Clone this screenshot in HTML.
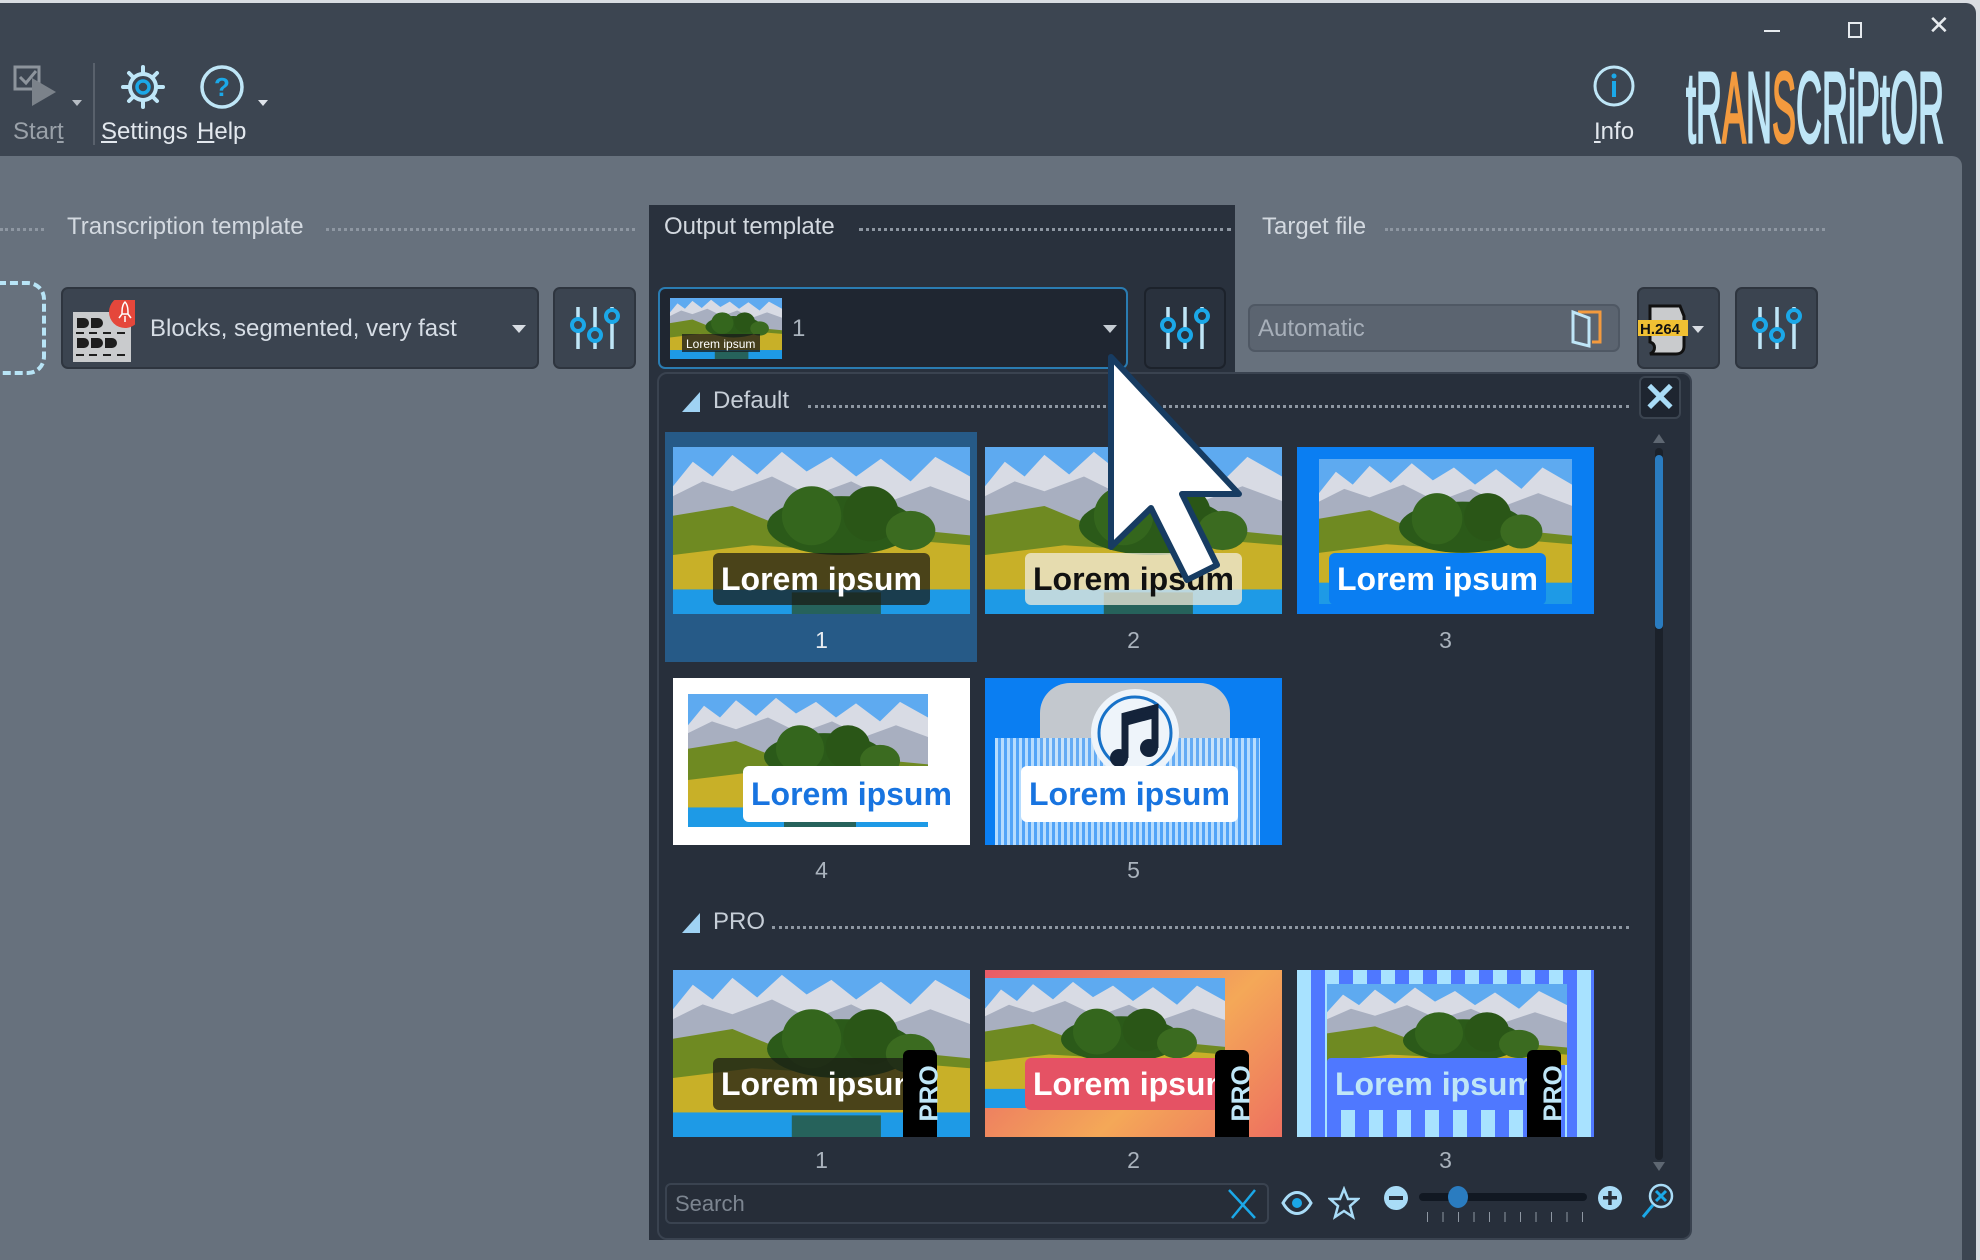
<!DOCTYPE html>
<html><head><meta charset="utf-8"><style>
*{margin:0;padding:0;box-sizing:border-box}
body{width:1980px;height:1260px;overflow:hidden;background:#d9dde2;font-family:"Liberation Sans",sans-serif;position:relative}
.a{position:absolute}
.win{left:0;top:3px;width:1976px;height:1257px;background:#3c4551;border-radius:0 10px 0 0}
.content{left:0;top:156px;width:1962px;height:1104px;background:#67717d;border-radius:0 10px 0 0}
.lbl{font-size:24px;color:#d3d9e0}
.dots{border-top:3px dotted #8e97a2;height:0}
.btn{background:#3b4450;border:2px solid #2e353f;border-radius:7px}
.tb{color:#e3e8ee;font-size:24px}
.num{font-size:23px;color:#aab3bd;width:297px;text-align:center}
.cap{font-weight:bold;font-size:32px;white-space:nowrap;line-height:52px;padding:0 8px;border-radius:6px}
.th{width:297px;height:167px;overflow:hidden}
</style></head><body>
<svg width="0" height="0" style="position:absolute">
<symbol id="sc" viewBox="0 0 300 170" preserveAspectRatio="none">
<rect width="300" height="170" fill="#3f8fe0"/>
<rect width="300" height="60" fill="#5eaaf0"/>
<polygon points="0,40 20,15 40,30 60,8 85,28 110,5 135,25 160,10 185,30 210,12 240,35 265,10 300,30 300,90 0,90" fill="#d8dbe4"/>
<polygon points="0,50 30,35 60,45 100,30 140,50 180,35 220,55 260,40 300,55 300,100 0,100" fill="#a8afc0"/>
<polygon points="0,70 60,60 120,85 200,80 300,90 300,150 0,150" fill="#6f8a22"/>
<polygon points="0,110 80,100 160,105 240,95 300,100 300,150 0,150" fill="#c8b028"/>
<ellipse cx="170" cy="80" rx="75" ry="30" fill="#2b5a19"/>
<ellipse cx="140" cy="70" rx="30" ry="30" fill="#34661d"/>
<ellipse cx="200" cy="68" rx="28" ry="28" fill="#2a5617"/>
<ellipse cx="240" cy="85" rx="25" ry="20" fill="#3b6b20"/>
<rect y="145" width="300" height="25" fill="#1e9ae6"/>
<rect x="120" y="148" width="90" height="22" fill="#2a4a20" opacity=".7"/>
</symbol>
</svg>

<div class="a win"></div>
<svg class="a" style="left:12px;top:64px" width="50" height="46" viewBox="0 0 50 46"><rect x="3" y="3" width="24" height="22" fill="none" stroke="#8d949c" stroke-width="3"/><path d="M8 13l6 6 10-12" fill="none" stroke="#8d949c" stroke-width="3"/><path d="M20 14v28l24-14z" fill="#7b828a"/></svg>
<div class="a" style="left:72px;top:100px;border:5px solid transparent;border-top:6px solid #b7bdc4"></div>
<div class="a tb" style="left:13px;top:118px;color:#9aa1a9">Star<u>t</u></div>
<div class="a" style="left:93px;top:63px;width:2px;height:82px;background:#59616c"></div>
<svg class="a" style="left:120px;top:64px" width="46" height="46" viewBox="0 0 46 46"><g stroke="#bfe6f7" stroke-width="4" stroke-linecap="round"><path d="M23 3v6M23 37v6M3 23h6M37 23h6M9 9l4 4M33 33l4 4M9 37l4-4M33 13l4-4"/></g><circle cx="23" cy="23" r="13" fill="none" stroke="#bfe6f7" stroke-width="4"/><circle cx="23" cy="23" r="6" fill="none" stroke="#1ba8e8" stroke-width="3.5"/></svg>
<svg class="a" style="left:199px;top:64px" width="46" height="46" viewBox="0 0 46 46"><circle cx="23" cy="23" r="20" fill="none" stroke="#bfe6f7" stroke-width="3.5"/><text x="23" y="32" text-anchor="middle" font-family="Liberation Sans" font-weight="bold" font-size="26" fill="#1ba8e8">?</text></svg>
<div class="a" style="left:258px;top:100px;border:5px solid transparent;border-top:6px solid #dfe4ea"></div>
<div class="a tb" style="left:101px;top:118px"><u>S</u>ettings</div>
<div class="a tb" style="left:197px;top:118px"><u>H</u>elp</div>
<div class="a" style="left:1764px;top:30px;width:16px;height:2px;background:#e6eaee"></div>
<div class="a" style="left:1848px;top:22px;width:14px;height:16px;border:2px solid #e6eaee"></div>
<div class="a" style="left:1928px;top:10px;color:#e6eaee;font-size:26px">✕</div>
<svg class="a" style="left:1592px;top:64px" width="44" height="44" viewBox="0 0 44 44"><circle cx="22" cy="22" r="19" fill="none" stroke="#bfe6f7" stroke-width="3"/><circle cx="22" cy="12" r="2.5" fill="#1ba8e8"/><rect x="20" y="17" width="4" height="16" fill="#1ba8e8"/></svg>
<div class="a tb" style="left:1594px;top:118px"><u>I</u>nfo</div>
<svg class="a" style="left:1684px;top:62px" width="266" height="84" viewBox="0 0 266 84"><text x="2" y="80" font-family="Liberation Sans Narrow,Liberation Sans" font-size="100" textLength="258" lengthAdjust="spacingAndGlyphs" fill="#bfe6f7" stroke="#bfe6f7" stroke-width="3">t<tspan>R</tspan><tspan fill="#f39a3e" stroke="#f39a3e">A</tspan>N<tspan fill="#f39a3e" stroke="#f39a3e">S</tspan>CRiPtOR</text></svg>

<div class="a content"></div>
<div class="a dots" style="left:0;top:228px;width:44px"></div>
<div class="a lbl" style="left:67px;top:213px">Transcription template</div>
<div class="a dots" style="left:326px;top:228px;width:309px"></div>
<div class="a" style="left:-20px;top:281px;width:66px;height:94px;border:4px dashed #b8e4f6;border-radius:18px"></div>
<div class="a btn" style="left:61px;top:287px;width:478px;height:82px"></div>
<svg class="a" style="left:73px;top:300px" width="62" height="64" viewBox="0 0 62 64"><rect x="0" y="12" width="58" height="50" fill="#c9cbcd"/><g fill="#1e1e1e"><path d="M4 18h7a5 5 0 010 10H4z"/><path d="M18 18h7a5 5 0 010 10h-7z"/><path d="M4 38h7a5 5 0 010 10H4z"/><path d="M18 38h7a5 5 0 010 10h-7z"/><path d="M32 38h7a5 5 0 010 10h-7z"/><rect x="3" y="32" width="8" height="2"/><rect x="16" y="32" width="8" height="2"/><rect x="30" y="32" width="8" height="2"/><rect x="44" y="32" width="8" height="2"/><rect x="3" y="54" width="8" height="2"/><rect x="16" y="54" width="8" height="2"/><rect x="30" y="54" width="8" height="2"/><rect x="44" y="54" width="8" height="2"/></g><circle cx="52" cy="12" r="16" fill="#e5473b"/><path d="M52 2c3 3 3 8 3 12h-6c0-4 0-9 3-12zM49 14l-3 4M55 14l3 4M52 16v6" fill="none" stroke="#fff" stroke-width="1.5"/></svg>
<div class="a" style="left:150px;top:315px;font-size:24px;color:#d6dde5">Blocks, segmented, very fast</div>
<div class="a" style="left:512px;top:325px;border:7px solid transparent;border-top:8px solid #d8dde3"></div>
<div class="a btn" style="left:553px;top:287px;width:83px;height:82px"></div>
<svg class="a" style="left:570px;top:303px" width="50" height="50" viewBox="0 0 50 50"><g stroke="#bfe6f7" stroke-width="3.5"><path d="M8 4v42M25 4v42M42 4v42"/></g><g fill="#3b4450" stroke="#1ba8e8" stroke-width="4"><circle cx="8" cy="22" r="6"/><circle cx="25" cy="32" r="6"/><circle cx="42" cy="13" r="6"/></g></svg>

<div class="a" style="left:649px;top:205px;width:586px;height:1035px;background:#29313d"></div>
<div class="a lbl" style="left:664px;top:213px">Output template</div>
<div class="a dots" style="left:859px;top:228px;width:372px"></div>
<div class="a" style="left:658px;top:287px;width:470px;height:82px;background:#1f2631;border:2px solid #2a7cb2;border-radius:7px"></div>
<svg class="a" style="left:670px;top:298px" width="112" height="61"><use href="#sc" width="112" height="61"/><rect x="12" y="36" width="78" height="18" fill="#1a1a1a" opacity=".75"/><text x="16" y="50" font-family="Liberation Sans" font-size="12" fill="#fff">Lorem ipsum</text></svg>
<div class="a" style="left:792px;top:315px;font-size:24px;color:#aab3bd">1</div>
<div class="a" style="left:1103px;top:325px;border:7px solid transparent;border-top:8px solid #c5ccd3"></div>
<div class="a" style="left:1144px;top:287px;width:82px;height:82px;background:#29313d;border:2px solid #1c222b;border-radius:7px"></div>
<svg class="a" style="left:1160px;top:303px" width="50" height="50" viewBox="0 0 50 50"><g stroke="#bfe6f7" stroke-width="3.5"><path d="M8 4v42M25 4v42M42 4v42"/></g><g fill="#29313d" stroke="#1ba8e8" stroke-width="4"><circle cx="8" cy="22" r="6"/><circle cx="25" cy="32" r="6"/><circle cx="42" cy="13" r="6"/></g></svg>

<div class="a lbl" style="left:1262px;top:213px">Target file</div>
<div class="a dots" style="left:1385px;top:228px;width:440px"></div>
<div class="a" style="left:1248px;top:304px;width:372px;height:48px;background:#5b6470;border:2px solid #4f5864;border-radius:7px"></div>
<div class="a" style="left:1258px;top:315px;font-size:24px;color:#a7afb9">Automatic</div>
<svg class="a" style="left:1570px;top:308px" width="36" height="40" viewBox="0 0 36 40"><path d="M8 4h22v30h-8" fill="none" stroke="#f39a3e" stroke-width="3"/><path d="M3 4l16 6v28L3 34z" fill="#5b6470" stroke="#bfe6f7" stroke-width="3"/></svg>
<div class="a btn" style="left:1637px;top:287px;width:83px;height:82px"></div>
<svg class="a" style="left:1636px;top:300px" width="72" height="60" viewBox="0 0 72 60"><path d="M14 6h30l4 10v30c0 5-3 8-8 8H14c6-3 6-10 0-12z" fill="#c9cbcd" stroke="#111" stroke-width="3"/><rect x="2" y="20" width="50" height="16" fill="#f0c033"/><text x="4" y="34" font-family="Liberation Sans" font-weight="bold" font-size="15" fill="#111">H.264</text><path d="M56 26h12l-6 7z" fill="#d8dde3"/></svg>
<div class="a btn" style="left:1735px;top:287px;width:83px;height:82px"></div>
<svg class="a" style="left:1752px;top:303px" width="50" height="50" viewBox="0 0 50 50"><g stroke="#bfe6f7" stroke-width="3.5"><path d="M8 4v42M25 4v42M42 4v42"/></g><g fill="#3b4450" stroke="#1ba8e8" stroke-width="4"><circle cx="8" cy="22" r="6"/><circle cx="25" cy="32" r="6"/><circle cx="42" cy="13" r="6"/></g></svg>

<div class="a" style="left:657px;top:372px;width:1035px;height:868px;background:#272f3b;border:2px solid #3a4350;border-radius:10px"></div>
<div class="a" style="left:682px;top:392px;width:0;height:0;border-left:18px solid transparent;border-bottom:20px solid #9fd2f3"></div>
<div class="a lbl" style="left:713px;top:387px;color:#c6ced7">Default</div>
<div class="a dots" style="left:808px;top:405px;width:821px"></div>
<div class="a" style="left:1639px;top:376px;width:42px;height:43px;background:#1e2530;border:2px solid #3b4450;border-radius:6px;color:#a9dcf7;font-size:40px;font-weight:bold;text-align:center;line-height:40px">✕</div>
<div class="a" style="left:1653px;top:428px;border:6px solid transparent;border-bottom:9px solid #5e6772"></div>
<div class="a" style="left:1655px;top:448px;width:8px;height:712px;background:#1b212a;border-radius:4px"></div>
<div class="a" style="left:1655px;top:455px;width:8px;height:174px;background:#2a7cc0;border-radius:4px"></div>
<div class="a" style="left:1653px;top:1162px;border:6px solid transparent;border-top:9px solid #5e6772"></div>

<div class="a" style="left:665px;top:432px;width:312px;height:230px;background:#265a87"></div>
<div class="a th" style="left:673px;top:447px"><svg width="297" height="167"><use href="#sc" width="297" height="167"/></svg><div class="a cap" style="left:40px;top:106px;background:rgba(25,25,20,.72);color:#fff">Lorem ipsum</div></div>
<div class="a th" style="left:985px;top:447px"><svg width="297" height="167"><use href="#sc" width="297" height="167"/></svg><div class="a cap" style="left:40px;top:106px;background:rgba(240,235,220,.75);color:#111">Lorem ipsum</div></div>
<div class="a th" style="left:1297px;top:447px;background:#0a7ef2"><svg class="a" style="left:22px;top:12px" width="253" height="145"><use href="#sc" width="253" height="145"/></svg><div class="a cap" style="left:32px;top:106px;background:#0a7ef2;color:#fff">Lorem ipsum</div></div>
<div class="a num" style="left:673px;top:627px;color:#e8ecf0">1</div>
<div class="a num" style="left:985px;top:627px">2</div>
<div class="a num" style="left:1297px;top:627px">3</div>
<div class="a th" style="left:673px;top:678px;background:#fff"><svg class="a" style="left:15px;top:16px" width="240" height="133"><use href="#sc" width="240" height="133"/></svg><div class="a cap" style="left:70px;top:88px;background:#fff;color:#1874e0;line-height:56px">Lorem ipsum</div></div>
<div class="a th" style="left:985px;top:678px;background:#0a7ef2">
<div class="a" style="left:55px;top:5px;width:190px;height:100px;background:#c3c8ce;border-radius:30px"></div>
<div class="a" style="left:10px;top:60px;width:265px;height:107px;background:repeating-linear-gradient(90deg,#c9e6ff 0 3px,#5aa8f8 3px 6px);opacity:.9"></div>
<svg class="a" style="left:85px;top:10px" width="130" height="90" viewBox="0 0 130 90"><circle cx="65" cy="45" r="44" fill="#eef4fa"/><circle cx="65" cy="45" r="36" fill="none" stroke="#1872c8" stroke-width="3"/><path d="M55 70V28l30-8v40" fill="none" stroke="#14233a" stroke-width="7"/><path d="M55 30l30-8v8l-30 8z" fill="#14233a"/><circle cx="49" cy="70" r="9" fill="#14233a"/><circle cx="79" cy="60" r="9" fill="#14233a"/></svg>
<div class="a cap" style="left:36px;top:88px;background:#fff;color:#1874e0;line-height:56px">Lorem ipsum</div></div>
<div class="a num" style="left:673px;top:857px">4</div>
<div class="a num" style="left:985px;top:857px">5</div>
<div class="a" style="left:682px;top:913px;width:0;height:0;border-left:18px solid transparent;border-bottom:20px solid #9fd2f3"></div>
<div class="a lbl" style="left:713px;top:908px;color:#c6ced7">PRO</div>
<div class="a dots" style="left:772px;top:926px;width:857px"></div>
<div class="a th" style="left:673px;top:970px"><svg width="297" height="167"><use href="#sc" width="297" height="167"/></svg><div class="a cap" style="left:40px;top:88px;background:rgba(25,25,20,.72);color:#fff;width:220px;overflow:hidden">Lorem ipsum</div><div class="a" style="left:230px;top:80px;width:34px;height:87px;background:#000;border-radius:6px 6px 0 0"></div><div class="a" style="left:228px;top:108px;transform:rotate(-90deg);color:#bfe6f7;font-weight:bold;font-size:26px">PRO</div></div>
<div class="a th" style="left:985px;top:970px;background:linear-gradient(135deg,#e85a68,#f4a858 60%,#ee7060)"><svg class="a" style="left:0;top:8px" width="240" height="130"><use href="#sc" width="240" height="130"/></svg><div class="a cap" style="left:40px;top:88px;background:#e55264;color:#fff;width:220px;overflow:hidden">Lorem ipsum</div><div class="a" style="left:230px;top:80px;width:34px;height:87px;background:#000;border-radius:6px 6px 0 0"></div><div class="a" style="left:228px;top:108px;transform:rotate(-90deg);color:#bfe6f7;font-weight:bold;font-size:26px">PRO</div></div>
<div class="a th" style="left:1297px;top:970px;background:repeating-linear-gradient(90deg,#a8e2ff 0 14px,#4f78ff 14px 28px)"><svg class="a" style="left:30px;top:14px" width="240" height="120"><use href="#sc" width="240" height="120"/></svg><div class="a" style="left:30px;top:95px;width:240px;height:72px;background:repeating-linear-gradient(90deg,#4f78ff 0 14px,#a8e2ff 14px 28px)"></div><div class="a cap" style="left:30px;top:88px;background:#4f78ff;color:#bfe6f7;width:210px;overflow:hidden;border-radius:4px">Lorem ipsum</div><div class="a" style="left:230px;top:80px;width:34px;height:87px;background:#000;border-radius:6px 6px 0 0"></div><div class="a" style="left:228px;top:108px;transform:rotate(-90deg);color:#bfe6f7;font-weight:bold;font-size:26px">PRO</div></div>
<div class="a num" style="left:673px;top:1147px">1</div>
<div class="a num" style="left:985px;top:1147px">2</div>
<div class="a num" style="left:1297px;top:1147px">3</div>
<div class="a" style="left:665px;top:1183px;width:604px;height:41px;background:#262d38;border:2px solid #3a4350;border-radius:6px"></div>
<div class="a" style="left:675px;top:1191px;font-size:22px;color:#7c8590">Search</div>
<svg class="a" style="left:1226px;top:1188px" width="32" height="32"><path d="M3 2l26 28M29 2L6 30" stroke="#1ba8e8" stroke-width="2.5"/></svg>
<svg class="a" style="left:1281px;top:1188px" width="32" height="30" viewBox="0 0 32 30"><path d="M2 15c8-14 20-14 28 0-8 14-20 14-28 0z" fill="none" stroke="#a9dcf7" stroke-width="3"/><circle cx="16" cy="15" r="5" fill="#1ba8e8"/></svg>
<svg class="a" style="left:1328px;top:1186px" width="32" height="34" viewBox="0 0 32 34"><path d="M16 3l4 10h10l-8 7 3 11-9-6-9 6 3-11-8-7h10z" fill="none" stroke="#a9dcf7" stroke-width="2.5"/></svg>
<svg class="a" style="left:1383px;top:1185px" width="26" height="26"><circle cx="13" cy="13" r="12" fill="#a9dcf7"/><rect x="6" y="11" width="14" height="4" fill="#272f3b"/></svg>
<div class="a" style="left:1419px;top:1193px;width:168px;height:8px;background:#111822;border-radius:4px"></div>
<div class="a" style="left:1448px;top:1186px;width:20px;height:22px;background:#2a7cc0;border-radius:50%"></div>
<div class="a" style="left:1427px;top:1212px;width:156px;height:10px;background:repeating-linear-gradient(90deg,#8e97a2 0 1px,transparent 1px 15.5px)"></div>
<svg class="a" style="left:1597px;top:1185px" width="26" height="26"><circle cx="13" cy="13" r="12" fill="#a9dcf7"/><rect x="6" y="11" width="14" height="3.5" fill="#272f3b"/><rect x="11.2" y="6" width="3.5" height="14" fill="#272f3b"/></svg>
<svg class="a" style="left:1640px;top:1183px" width="34" height="38" viewBox="0 0 34 38"><circle cx="21" cy="13" r="11" fill="none" stroke="#a9dcf7" stroke-width="2.5"/><path d="M13 22L3 34" stroke="#1ba8e8" stroke-width="3"/><path d="M16 8l10 10M26 8L16 18" stroke="#1ba8e8" stroke-width="3"/></svg>

<svg class="a" style="left:1100px;top:350px" width="160" height="240" viewBox="0 0 160 240"><path d="M11 7L11 197L51 158L87 230L117 215L82 144L139 144Z" fill="#fff" stroke="#173c62" stroke-width="6" stroke-linejoin="round"/></svg>
</body></html>
